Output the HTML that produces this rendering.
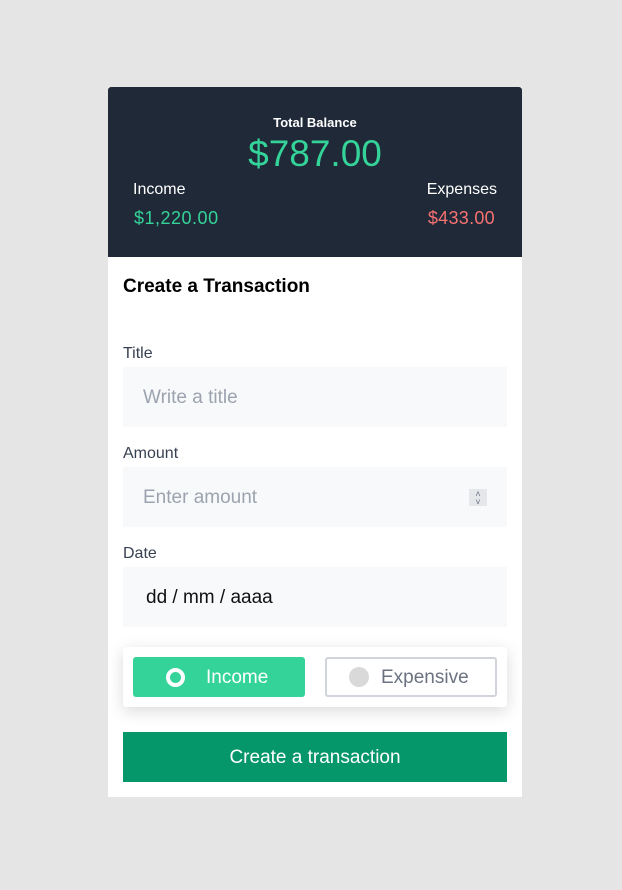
<!DOCTYPE html>
<html><head><style>
*{box-sizing:border-box;margin:0;padding:0}
body{width:622px;height:890px;background:#e5e5e5;font-family:"Liberation Sans",sans-serif;position:relative;overflow:hidden}
.card{position:absolute;left:108px;top:87px;width:414px;height:710px;background:#fff}
.head{position:absolute;left:0;top:0;width:414px;height:170px;background:#1f2937;border-radius:3px 3px 0 0;color:#fff}
.abs{position:absolute;white-space:nowrap}
.lbl{font-size:16px;color:#374151}
.inp{position:absolute;left:15px;width:384px;height:60px;background:#f8f9fb;font-size:19px;color:#9ca3af;padding-left:20px;line-height:62px}
</style></head><body>
<div class="card">
<div class="head">
<div class="abs" style="left:0;width:414px;text-align:center;top:28px;font-size:13px;font-weight:bold">Total Balance</div>
<div class="abs" style="left:0;width:414px;text-align:center;top:46px;font-size:37px;color:#34d399">$787.00</div>
<div class="abs" style="left:25px;top:94px;font-size:16px">Income</div>
<div class="abs" style="left:26px;top:121px;font-size:18px;color:#34d399;letter-spacing:0.5px">$1,220.00</div>
<div class="abs" style="right:25px;top:94px;font-size:16px">Expenses</div>
<div class="abs" style="right:27px;top:121px;font-size:18px;color:#f87171;letter-spacing:0.3px">$433.00</div>
</div>
<div class="abs" style="left:15px;top:189px;font-size:19px;font-weight:bold;color:#000">Create a Transaction</div>
<div class="abs lbl" style="left:15px;top:258px">Title</div>
<div class="inp" style="top:280px">Write a title</div>
<div class="abs lbl" style="left:15px;top:358px">Amount</div>
<div class="inp" style="top:380px">Enter amount<div style="position:absolute;right:20px;top:22px;width:18px;height:17px;background:#e5e7eb;font-size:9px;line-height:8px;color:#6b7280;text-align:center;padding-top:1px">˄<br>˅</div></div>
<div class="abs lbl" style="left:15px;top:458px">Date</div>
<div class="inp" style="top:480px;color:#111;padding-left:23px">dd / mm / aaaa</div>
<div class="abs" style="left:15px;top:560px;width:384px;height:60px;background:#fff;border-radius:3px;box-shadow:0 4px 16px rgba(0,0,0,.15)">
<div class="abs" style="left:10px;top:10px;width:172px;height:40px;background:#34d399;border-radius:3px;color:#fff;font-size:19px;line-height:42px;padding-left:73px">Income<div style="position:absolute;left:33px;top:11px;width:19px;height:19px;border:4px solid #fff;border-radius:50%"></div></div>
<div class="abs" style="left:202px;top:10px;width:172px;height:40px;border:2px solid #d1d5db;border-radius:3px;color:#6b7280;font-size:19px;line-height:38px;padding-left:54px">Expensive<div style="position:absolute;left:22px;top:8px;width:20px;height:20px;background:#d9d9d9;border-radius:50%"></div></div>
</div>
<div class="abs" style="left:15px;top:645px;width:384px;height:50px;background:#059669;color:#fff;font-size:19px;text-align:center;line-height:52px">Create a transaction</div>
</div>
</body></html>
